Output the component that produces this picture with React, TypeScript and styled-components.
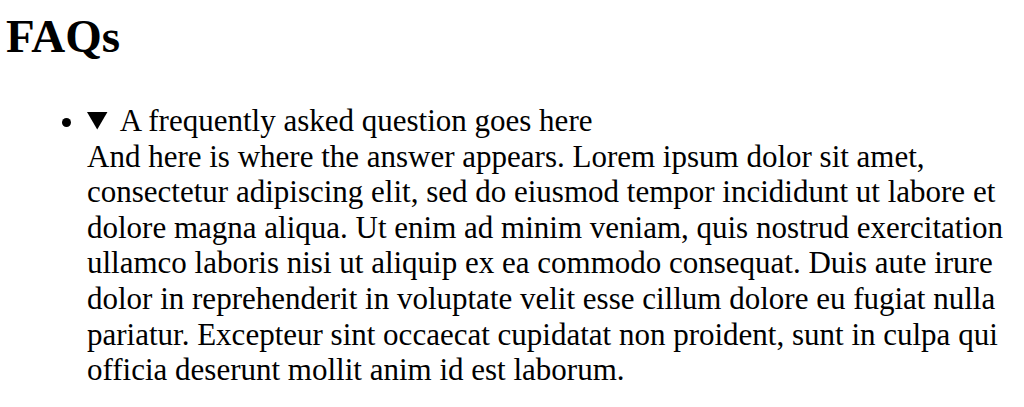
import styled, { createGlobalStyle } from 'styled-components'

const GlobalStyle = createGlobalStyle`
  html, body {
    margin: 0;
    padding: 0;
    background: #ffffff;
  }
  body {
    font-family: "Liberation Serif", "Times New Roman", serif;
    color: #000000;
  }
`

const Page = styled.main`
  padding: 0 0 0 6px;
`

const Title = styled.h1`
  margin: 9px 0 0;
  font-size: 47px;
  line-height: 54px;
  font-weight: 700;
`

const List = styled.ul`
  margin: 40px 0 0;
  padding-left: 81px;
  font-size: 31px;
  line-height: 35.6px;
`

const Item = styled.li`
  list-style: disc;
`

const Question = styled.details`
  display: block;
`

const Summary = styled.summary`
  cursor: pointer;
`

const Answer = styled.p`
  margin: 0;
`

export default function App() {
  return (
    <>
      <GlobalStyle />
      <Page>
        <Title>FAQs</Title>
        <List>
          <Item>
            <Question open>
              <Summary>A frequently asked question goes here</Summary>
              <Answer>
                And here is where the answer appears. Lorem ipsum dolor sit amet, consectetur adipiscing elit, sed do
                eiusmod tempor incididunt ut labore et dolore magna aliqua. Ut enim ad minim veniam, quis nostrud
                exercitation ullamco laboris nisi ut aliquip ex ea commodo consequat. Duis aute irure dolor in
                reprehenderit in voluptate velit esse cillum dolore eu fugiat nulla pariatur. Excepteur sint occaecat
                cupidatat non proident, sunt in culpa qui officia deserunt mollit anim id est laborum.
              </Answer>
            </Question>
          </Item>
        </List>
      </Page>
    </>
  )
}
